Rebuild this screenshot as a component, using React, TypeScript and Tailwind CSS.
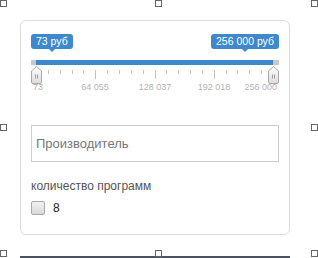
const ticks = Array.from({ length: 21 }, (_, i) => 5 + i * 11.85);

const scale = [
  { label: "73", x: 2, align: "left" },
  { label: "64 055", x: 64, align: "center" },
  { label: "128 037", x: 124, align: "center" },
  { label: "192 018", x: 183, align: "center" },
  { label: "256 000", x: 246, align: "right" },
];

const handles = [
  [0, 0],
  [155, 0],
  [311, 0],
  [0, 124],
  [311, 124],
  [0, 250],
  [155, 250],
  [311, 250],
];

function Handle({ left }: { left: number }) {
  return (
    <svg
      className="absolute top-[32px]"
      style={{ left }}
      width="11"
      height="18"
      viewBox="0 0 11 18"
    >
      <defs>
        <linearGradient id="hg" x1="0" y1="0" x2="0" y2="1">
          <stop offset="0" stopColor="#ffffff" />
          <stop offset="1" stopColor="#dcdcdc" />
        </linearGradient>
      </defs>
      <path
        d="M0.5 5 L5.5 0.5 L10.5 5 L10.5 16 Q10.5 17.5 9 17.5 L2 17.5 Q0.5 17.5 0.5 16 Z"
        fill="url(#hg)"
        stroke="#a9a9a9"
      />
      <path d="M4.5 8.5 V12.5 M6.5 8.5 V12.5" stroke="#a0a0a0" />
    </svg>
  );
}

function Tip({ text, className }: { text: string; className: string }) {
  return (
    <div className={`absolute top-0 ${className}`}>
      <div className="rounded-[3px] bg-[#3e88cb] px-[5px] text-[10.5px] leading-[15px] text-white">
        {text}
      </div>
      <div className="mx-auto h-0 w-0 border-x-[3px] border-t-[3px] border-x-transparent border-t-[#3e88cb]" />
    </div>
  );
}

function RangeSlider() {
  return (
    <div className="relative h-[59px] w-[248px]">
      <Tip text="73 руб" className="left-0" />
      <Tip text="256 000 руб" className="right-0" />
      <div className="absolute top-[26px] flex h-[5px] w-full">
        <div className="w-[5px] bg-[#c9c9c9]" />
        <div className="flex-1 bg-[#3e88cb]" />
        <div className="w-[6px] bg-[#c9c9c9]" />
      </div>
      <svg className="absolute left-0 top-[36px]" width="248" height="10">
        {ticks.map((x, i) => (
          <line
            key={i}
            x1={Math.round(x) + 0.5}
            x2={Math.round(x) + 0.5}
            y1="0"
            y2={i % 5 === 0 ? 9 : 4}
            stroke="#c2c2c2"
          />
        ))}
      </svg>
      {scale.map((s) => (
        <span
          key={s.label}
          className={`absolute top-[48px] whitespace-nowrap text-[9px] leading-[11px] text-[#b3b3b3] ${
            s.align === "center" ? "-translate-x-1/2" : s.align === "right" ? "-translate-x-full" : ""
          }`}
          style={{ left: s.x }}
        >
          {s.label}
        </span>
      ))}
      <Handle left={0} />
      <Handle left={237} />
    </div>
  );
}

export default function App() {
  return (
    <div className="relative h-[258px] w-[318px] bg-white font-['Liberation_Sans',Arial,sans-serif]">
      <div className="pl-[20px] pt-[20px]">
        <div className="h-[215px] w-[270px] rounded-[6px] border border-[#dcdcdc] px-[10px] pt-[13px]">
          <RangeSlider />
          <input
            className="mt-[32px] block h-[37px] w-[248px] border border-[#cccccc] px-[4px] text-[13px] text-[#333] outline-none placeholder:text-[#777]"
            placeholder="Производитель"
          />
          <div className="mt-[16px] text-[12px] leading-[16px] text-[#555]">количество программ</div>
          <label className="mt-[7px] flex items-center gap-[8px]">
            <span className="block h-[14px] w-[14px] rounded-[2px] border border-[#a8a8a8] bg-gradient-to-b from-[#f2f2f2] to-[#d8d8d8]" />
            <span className="text-[12px] leading-[14px] text-[#222]">8</span>
          </label>
        </div>
      </div>
      <div className="ml-[20px] mt-[21px] h-[2px] w-[270px] bg-[#4b515e]" />
      {handles.map(([x, y], i) => (
        <div
          key={i}
          className="absolute h-[7px] w-[7px] border border-[#666] bg-white"
          style={{ left: x, top: y }}
        />
      ))}
    </div>
  );
}
